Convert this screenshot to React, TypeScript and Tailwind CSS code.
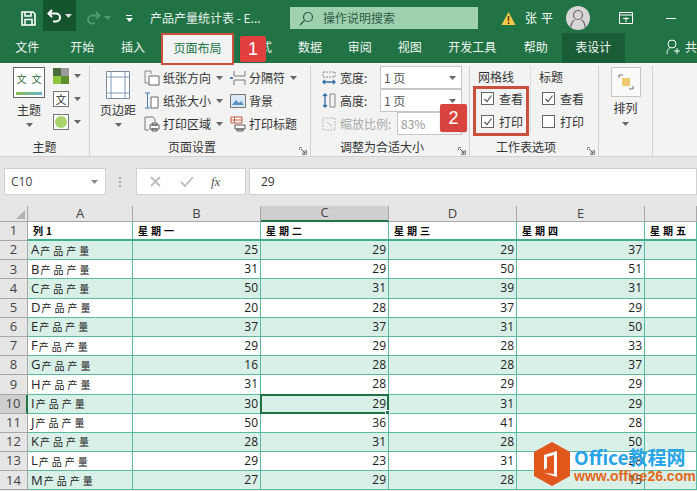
import React from "react";

const font = '"Noto Sans CJK SC", sans-serif';
const rows: [string, number, number, number, number][] = [
  ["A", 25, 29, 29, 37], ["B", 31, 29, 50, 51], ["C", 50, 31, 39, 31], ["D", 20, 28, 37, 29],
  ["E", 37, 37, 31, 50], ["F", 29, 29, 28, 33], ["G", 16, 28, 28, 37], ["H", 31, 28, 29, 29],
  ["I", 30, 29, 31, 29], ["J", 50, 36, 41, 28], ["K", 28, 31, 28, 50], ["L", 29, 23, 31, 28],
  ["M", 27, 29, 28, 15],
];

const Caret = ({ c = "#666" }: { c?: string }) => (
  <svg width="7" height="4" viewBox="0 0 7 4" className="shrink-0"><path d="M0 0h7L3.500 4z" fill={c} /></svg>
);

const Launcher = () => (
  <svg width="8" height="8" viewBox="0 0 8 8" className="shrink-0">
    <path d="M.5 3V.5H3M3 7.500h4.500V3" fill="none" stroke="#888" />
    <path d="M2 2l4 4M6 3.500V6H3.500" fill="none" stroke="#555" />
  </svg>
);

const Check = ({ on }: { on: boolean }) => (
  <span className="flex h-[13px] w-[13px] items-center justify-center border border-[#666] bg-white">
    {on && <svg width="10" height="10" viewBox="0 0 10 10"><path d="M1.500 5l2.500 2.500L8.500 1.500" fill="none" stroke="#555" strokeWidth="1.200" /></svg>}
  </span>
);

const CheckRow = ({ on, label }: { on: boolean; label: string }) => (
  <div className="flex h-[23px] items-center gap-[5px] text-[12px] text-[#333]"><Check on={on} /><span>{label}</span></div>
);

const SmallBtn = ({ icon, label, caret = false }: { icon: React.ReactNode; label: string; caret?: boolean }) => (
  <div className="flex h-[23px] items-center gap-[2px] whitespace-nowrap text-[12px] text-[#333]">
    <span className="flex w-[18px] justify-center">{icon}</span>
    <span>{label}</span>
    {caret && <span className="ml-[3px]"><Caret /></span>}
  </div>
);

const GroupLabel = ({ children, launcher = false }: { children: React.ReactNode; launcher?: boolean }) => (
  <div className={`relative mt-auto flex h-[20px] items-center justify-center pt-[2px] text-[12px] text-[#333] ${launcher ? "pr-[16px]" : ""}`}>
    <span>{children}</span>
    {launcher && <span className="absolute bottom-[1px] right-[3px] flex"><Launcher /></span>}
  </div>
);

const FitRow = ({ icon, label, value, disabled = false }: { icon: React.ReactNode; label: string; value: string; disabled?: boolean }) => (
  <div className={`flex h-[23px] items-center text-[12px] ${disabled ? "text-[#aaa]" : "text-[#333]"}`}>
    <span className="flex w-[15px] justify-center">{icon}</span>
    <span className="whitespace-nowrap pl-[4px]">{label}</span>
    <div className={`ml-auto flex h-[23px] items-center justify-between border border-[#c6c6c6] bg-white pl-[3px] pr-[5px] ${disabled ? "w-[65px]" : "w-[82px]"}`}>
      <span className="text-[12px]" style={{ color: disabled ? "#999" : "#555" }}>{value}</span>
      {!disabled && <Caret />}
    </div>
  </div>
);

function Header({ label, active = false }: { label: string; active?: boolean }) {
  return (
    <div className={`flex items-center justify-center border-r text-[13px] text-[#444] ${active ? "border-b-2 border-r-[#aaa] border-b-[#217346] bg-[#cfcfcf]" : "border-b border-[#a8a8a8] bg-[#e6e6e6]"}`}>{label}</div>
  );
}

export default function App() {
  return (
    <div className="relative flex h-[491px] w-[697px] flex-col overflow-hidden bg-[#e6e6e6]" style={{ fontFamily: font }}>
      {/* Title bar */}
      <div className="flex h-[36px] items-center bg-[#217346] text-white">
        <svg className="ml-[21px]" width="15" height="15" viewBox="0 0 15 15">
          <path d="M1 1h11l2 2v11H1z" fill="none" stroke="#fff" strokeWidth="1.600" />
          <path d="M4 1v4h6V1M4 14V8.500h7V14" fill="none" stroke="#fff" strokeWidth="1.500" />
        </svg>
        <div className="ml-[7px] flex h-[31px] w-[33px] items-center justify-center gap-[2px] self-start bg-[#14552f]">
          <svg width="16" height="14" viewBox="0 0 16 14"><path d="M5 1L1.500 4.500 5 8M2 4.500h7a4 4 0 0 1 0 8H6" fill="none" stroke="#fff" strokeWidth="2" /></svg>
          <Caret c="#ddd" />
        </div>
        <svg className="ml-[9px]" width="16" height="14" viewBox="0 0 16 14"><path d="M11 1l3.500 3.500L11 8M14 4.500H7a4 4 0 0 0 0 8h3" fill="none" stroke="#4e9a70" strokeWidth="2" /></svg>
        <span className="ml-[3px]"><Caret c="#4e9a70" /></span>
        <span className="ml-[15px] flex flex-col gap-[2px]"><span className="h-[1px] w-[6px] bg-white" /><Caret c="#fff" /></span>
        <span className="ml-[17px] w-[140px] whitespace-nowrap text-[12px] text-[#e8f2ec]">产品产量统计表 - E...</span>
        <div className="flex h-[22px] w-[188px] items-center bg-[#9fd1b1] pl-[9px] text-[#2d5c43]">
          <svg width="15" height="15" viewBox="0 0 15 15"><circle cx="9" cy="6" r="4.500" fill="none" stroke="#2d5c43" strokeWidth="1.200" /><path d="M5.500 9.500L1 14" stroke="#2d5c43" strokeWidth="1.300" /></svg>
          <span className="ml-[9px] text-[12px]">操作说明搜索</span>
        </div>
        <svg className="ml-[23px]" width="15" height="15" viewBox="0 0 15 15"><path d="M7.500 1L14.500 14H.5z" fill="#f2c84b" /><path d="M7.500 5v5M7.500 11v2" stroke="#5a3a10" strokeWidth="1.500" /></svg>
        <span className="ml-[9px] text-[12px] tracking-[4px]">张平</span>
        <div className="ml-[9px] flex h-[24px] w-[24px] items-center justify-center rounded-full bg-[#d6d6d6]">
          <svg width="16" height="18" viewBox="0 0 16 18"><circle cx="8" cy="6" r="4.500" fill="none" stroke="#77606b" strokeWidth="1.200" /><path d="M1 18c0-5 3-7 4-7M15 18c0-5-3-7-4-7" fill="none" stroke="#77606b" strokeWidth="1.200" /></svg>
        </div>
        <svg className="ml-[29px]" width="14" height="12" viewBox="0 0 14 12"><path d="M.5.5h13v11H.5zM.5 3h13M7 5v5M4 6.500h6" fill="none" stroke="#fff" /></svg>
        <span className="ml-[33px] h-[1px] w-[10px] bg-white" />
      </div>

      {/* Tabs */}
      <div className="flex h-[27px] bg-[#217346] text-[12px] text-[#f2f7f4]">
        {[["文件", "w-[55px]"], ["开始", "w-[56px]"], ["插入", "w-[46px]"]].map(([t, w]) => (
          <div key={t} className={`flex items-center justify-center pb-[5px] ${w}`}>{t}</div>
        ))}
        <div className="z-10 ml-[5px] -mt-[3px] flex h-[32px] w-[74px] items-center justify-center border-2 border-[#c9503f] bg-[#f3f3f3] pb-[3px] text-[#217346]">页面布局</div>
        {[["公式", "w-[52px]"], ["数据", "w-[49px]"], ["审阅", "w-[51px]"], ["视图", "w-[50px]"], ["开发工具", "w-[76px]"], ["帮助", "w-[52px]"]].map(([t, w]) => (
          <div key={t} className={`flex items-center justify-center pb-[5px] ${w}`}>{t}</div>
        ))}
        <div className="-mt-[3px] flex h-[30px] w-[64px] items-center justify-center bg-[#1a5c38] pb-[3px]">表设计</div>
        <div className="ml-[41px] flex items-center gap-[5px] pb-[5px]">
          <svg width="14" height="16" viewBox="0 0 14 16"><circle cx="6" cy="5" r="4" fill="none" stroke="#fff" /><path d="M1 15c0-4 2-6 3-6M8 12h6M11 9v6" fill="none" stroke="#fff" /></svg>
          <span>共</span>
        </div>
      </div>

      {/* Ribbon */}
      <div className="flex h-[94px] border-b border-[#d2d2d2] bg-[#f3f3f3] pt-[3px]">
        {/* Theme */}
        <div className="flex w-[90px] flex-col border-r border-[#d2d2d2]">
          <div className="flex flex-1 pl-[12px]">
            <div className="flex w-[34px] flex-col items-center">
              <div className="mt-[1px] flex h-[31px] w-[32px] flex-col justify-between border border-[#666] bg-white text-[10px] leading-[12px] text-[#2f6b3a]">
                <div className="flex justify-around pt-[5px]"><span>文</span><span>文</span></div>
                <div className="mx-[2px] mb-[2px] h-[3px] bg-[linear-gradient(90deg,#8ab84e,#62b6cf)]" />
              </div>
              <span className="mt-[4px] text-[12px] leading-[16px] text-[#333]">主题</span>
              <span className="mt-[5px]"><Caret /></span>
            </div>
            <div className="ml-[7px] flex flex-col gap-[7px] pt-[2px]">
              <div className="flex items-center gap-[5px]">
                <div className="grid h-[16px] w-[16px] grid-cols-2"><span className="bg-[#4b6b3a]" /><span className="bg-[#9a9a9a]" /><span className="bg-[#8cc63e]" /><span className="bg-[#5d8f2e]" /></div>
                <Caret />
              </div>
              <div className="flex items-center gap-[5px]">
                <div className="flex h-[16px] w-[16px] items-center justify-center border border-[#777] bg-white text-[11px] leading-none text-[#333]">文</div>
                <Caret />
              </div>
              <div className="flex items-center gap-[5px]">
                <div className="flex h-[16px] w-[16px] items-center justify-center border border-[#777] bg-white"><span className="h-[12px] w-[12px] rounded-full bg-[#a8d26a]" /></div>
                <Caret />
              </div>
            </div>
          </div>
          <GroupLabel>主题</GroupLabel>
        </div>

        {/* Page setup */}
        <div className="flex w-[221px] flex-col border-r border-[#d2d2d2]">
          <div className="flex flex-1">
            <div className="flex w-[52px] flex-col items-center pl-[4px] pt-[5px]">
              <svg width="24" height="28" viewBox="0 0 24 28"><path d="M.5.5h23v27H.5z" fill="#fff" stroke="#7b8a99" /><path d="M.5 6h23M.5 22h23M5 .5v27M19 .5v27" stroke="#7d9bbd" fill="none" /></svg>
              <span className="mt-[3px] whitespace-nowrap text-[12px] leading-[16px] text-[#333]">页边距</span>
              <span className="mt-[5px]"><Caret /></span>
            </div>
            <div className="w-[86px] pl-[1px]">
              <SmallBtn caret label="纸张方向" icon={<svg width="16" height="16" viewBox="0 0 16 16"><path d="M1 1h6v3M1 1v12h3" fill="none" stroke="#888" /><path d="M5 6h10v9H5z" fill="#fff" stroke="#666" /></svg>} />
              <SmallBtn caret label="纸张大小" icon={<svg width="16" height="17" viewBox="0 0 16 17"><path d="M1 1h5M3.500 1v15M1 16h5" stroke="#4a7fb5" fill="none" /><path d="M7 5h7v11H7z" fill="#fff" stroke="#666" /></svg>} />
              <SmallBtn caret label="打印区域" icon={<svg width="16" height="16" viewBox="0 0 16 16"><path d="M1 1h8l2 2v3M1 1v13h4" fill="none" stroke="#777" /><path d="M6 9h9v4H6zM8 7h5v2H8zM8 13h5v2H8z" fill="#fff" stroke="#555" /></svg>} />
            </div>
            <div className="flex-1 pl-[1px]">
              <SmallBtn caret label="分隔符" icon={<svg width="17" height="16" viewBox="0 0 17 16"><path d="M4 1v5h11V1M4 15v-5h11v5" fill="none" stroke="#777" /><path d="M0 8h3" stroke="#4a7fb5" strokeWidth="2" /></svg>} />
              <SmallBtn label="背景" icon={<svg width="16" height="14" viewBox="0 0 16 14"><path d="M.5.5h15v13H.5z" fill="#dbe8f5" stroke="#777" /><path d="M2 11l4-5 3 3 2-2 3 4z" fill="#5a8fc4" /></svg>} />
              <SmallBtn label="打印标题" icon={<svg width="16" height="16" viewBox="0 0 16 16"><path d="M1 1h11v6H1z" fill="#fff" stroke="#c0563f" /><path d="M1 4h11M4.500 1v6" stroke="#c0563f" /><path d="M5 9h10v4H5zM7 13h6v2H7z" fill="#fff" stroke="#555" /></svg>} />
            </div>
          </div>
          <GroupLabel launcher>页面设置</GroupLabel>
        </div>

        {/* Fit */}
        <div className="flex w-[159px] flex-col border-r border-[#d2d2d2]">
          <div className="pl-[10px] pr-[7px]">
            <FitRow label="宽度:" value="1 页" icon={<svg width="14" height="14" viewBox="0 0 14 14"><path d="M1 1h12v5H1z" fill="none" stroke="#888" strokeDasharray="2 1" /><path d="M1 11h12M3 9l-2 2 2 2M11 9l2 2-2 2" fill="none" stroke="#2d6ca8" strokeWidth="1.300" /></svg>} />
            <FitRow label="高度:" value="1 页" icon={<svg width="14" height="15" viewBox="0 0 14 15"><path d="M8 1h5v13H8z" fill="none" stroke="#888" /><path d="M3 1v13M1 3l2-2 2 2M1 12l2 2 2-2" fill="none" stroke="#2d6ca8" strokeWidth="1.300" /></svg>} />
            <FitRow disabled label="缩放比例:" value="83%" icon={<svg width="14" height="14" viewBox="0 0 14 14"><path d="M1 1h12v12H1z" fill="none" stroke="#bbb" strokeDasharray="2 1" /><path d="M5 5l5 5" stroke="#bbb" /></svg>} />
          </div>
          <GroupLabel launcher>调整为合适大小</GroupLabel>
        </div>

        {/* Sheet options */}
        <div className="flex w-[129px] flex-col border-r border-[#d2d2d2]">
          <div className="flex">
            <div className="w-[61px] border-r border-[#dcdcdc] pl-[8px]">
              <div className="flex h-[21px] items-center text-[12px] text-[#333]">网格线</div>
              <div className="pl-[3px]"><CheckRow on label="查看" /><CheckRow on label="打印" /></div>
            </div>
            <div className="pl-[8px]">
              <div className="flex h-[21px] items-center text-[12px] text-[#333]">标题</div>
              <div className="pl-[3px]"><CheckRow on label="查看" /><CheckRow on={false} label="打印" /></div>
            </div>
          </div>
          <GroupLabel launcher>工作表选项</GroupLabel>
        </div>

        {/* Arrange */}
        <div className="flex w-[54px] flex-col items-center border-r border-[#d2d2d2]">
          <div className="mt-[1px] flex h-[30px] w-[30px] items-center justify-center border border-[#c6c6c6] bg-[#fafafa]">
            <svg width="16" height="16" viewBox="0 0 16 16"><path d="M1 4V1h4M15 12v3h-4" fill="none" stroke="#777" /><path d="M4 4h8v8H4z" fill="#efc970" /></svg>
          </div>
          <span className="mt-[3px] text-[12px] leading-[16px] text-[#333]">排列</span>
          <span className="mt-[6px]"><Caret /></span>
        </div>
      </div>

      {/* Formula bar */}
      <div className="flex h-[49px] items-start bg-[#e6e6e6] pl-[4px] pt-[11px]">
        <div className="flex h-[27px] w-[102px] items-center justify-between border border-[#d0d0d0] bg-white pl-[6px] pr-[7px] text-[12px] text-[#444]" style={{ fontFamily: '"Open Sans", sans-serif' }}>
          C10<Caret c="#888" />
        </div>
        <div className="ml-[13px] mt-[9px] flex flex-col gap-[2px]"><span className="h-[2px] w-[2px] bg-[#aaa]" /><span className="h-[2px] w-[2px] bg-[#aaa]" /><span className="h-[2px] w-[2px] bg-[#aaa]" /></div>
        <div className="ml-[15px] flex h-[27px] w-[110px] items-center border border-[#d0d0d0] bg-white pl-[13px]">
          <svg width="11" height="11" viewBox="0 0 11 11"><path d="M1 1l9 9M10 1l-9 9" stroke="#bdbdbd" strokeWidth="1.800" /></svg>
          <svg className="ml-[19px]" width="14" height="11" viewBox="0 0 14 11"><path d="M1 6l4 4 8-9" fill="none" stroke="#bdbdbd" strokeWidth="1.800" /></svg>
          <span className="ml-[17px] text-[13px] italic text-[#555]" style={{ fontFamily: '"Liberation Serif", serif' }}>fx</span>
        </div>
        <div className="ml-[3px] flex h-[27px] flex-1 items-center border border-[#d0d0d0] bg-white pl-[11px] text-[12px] text-[#333]" style={{ fontFamily: '"Open Sans", sans-serif' }}>29</div>
      </div>

      {/* Sheet */}
      <div className="grid flex-1 grid-cols-[28px_105px_128px_128px_128px_128px_52px] grid-rows-[16px_19px_repeat(13,19.200px)] text-[12px]" style={{ fontFamily: '"Open Sans", sans-serif' }}>
        <div className="flex items-end justify-end border-b border-r border-[#a8a8a8] bg-[#e6e6e6] p-[2px]">
          <svg width="9" height="9" viewBox="0 0 9 9"><path d="M9 0v9H0z" fill="#b4b4b4" /></svg>
        </div>
        <Header label="A" /><Header label="B" /><Header label="C" active /><Header label="D" /><Header label="E" /><Header label="" />

        <div className="flex items-center justify-center border-b border-r border-[#a8a8a8] bg-[#e6e6e6] text-[13px] text-[#444]">1</div>
        {["列1", "星期一", "星期二", "星期三", "星期四", "星期五"].map((h) => (
          <div key={h} className="flex items-center whitespace-nowrap border-b-2 border-r border-b-[#3fae8d] border-r-[#5cbb9f] bg-white pl-[5px] text-[10px] font-bold tracking-[3px] text-black" style={{ fontFamily: font }}>{h}</div>
        ))}

        {rows.map((r, i) => {
          const n = i + 2;
          const band = i % 2 === 0 ? "bg-[#d9f0e8]" : "bg-white";
          const cell = `flex items-center justify-end border-b border-r border-[#5cbb9f] pr-[2px] text-[#222] ${band}`;
          const sel = n === 10;
          return (
            <React.Fragment key={n}>
              <div className={`flex items-center justify-center border-b text-[13px] text-[#444] ${sel ? "border-b-[#a8a8a8] border-r-2 border-r-[#217346] bg-[#cfcfcf]" : "border-r border-[#a8a8a8] bg-[#e6e6e6]"}`}>{n}</div>
              <div className={`flex items-center justify-start gap-[1px] whitespace-nowrap border-b border-r border-[#5cbb9f] pl-[3px] text-[13px] text-[#222] ${band}`}>
                <span>{r[0]}</span><span className="text-[10px] tracking-[3px]" style={{ fontFamily: font }}>产品产量</span>
              </div>
              <div className={cell}>{r[1]}</div>
              <div className={`${cell} relative`}>
                {r[2]}
                {sel && (
                  <span className="absolute -inset-[1px] border-2 border-[#217346]">
                    <span className="absolute -bottom-[3px] -right-[3px] h-[5px] w-[5px] border border-white bg-[#217346]" />
                  </span>
                )}
              </div>
              <div className={cell}>{r[3]}</div>
              <div className={cell}>{r[4]}</div>
              <div className={cell} />
            </React.Fragment>
          );
        })}
      </div>

      {/* Annotations */}
      <div className="absolute left-[240px] top-[36px] flex h-[26px] w-[26px] items-center justify-center rounded-[2px] bg-[#e2403f] text-[18px] text-white shadow" style={{ fontFamily: '"Liberation Sans", sans-serif' }}>1</div>
      <div className="absolute left-[440px] top-[104px] flex h-[28px] w-[27px] items-center justify-center rounded-[2px] bg-[#d9443f] text-[18px] text-white shadow" style={{ fontFamily: '"Liberation Sans", sans-serif' }}>2</div>
      <div className="absolute left-[473px] top-[86px] h-[50px] w-[56px] border-[3px] border-[#c9503f]" />

      {/* Watermark */}
      <div className="absolute left-[534px] top-[442px] flex items-center">
        <svg width="36" height="44" viewBox="0 0 36 44">
          <path d="M18 0l18 10v24L18 44 0 34V10z" fill="#e2581c" />
          <path d="M10 13l13-4v26l-13-4 10 1V13l-7 2v11l-3 2z" fill="#fff" />
        </svg>
        <div className="ml-[4px] flex flex-col">
          <span className="whitespace-nowrap text-[19px] font-bold leading-[24px] text-[#2aa5e8]">Office教程网</span>
          <span className="whitespace-nowrap text-[14px] font-bold leading-[15px] text-[#e2681c]" style={{ fontFamily: '"Liberation Sans", sans-serif' }}>www.office26.com</span>
        </div>
      </div>
    </div>
  );
}
